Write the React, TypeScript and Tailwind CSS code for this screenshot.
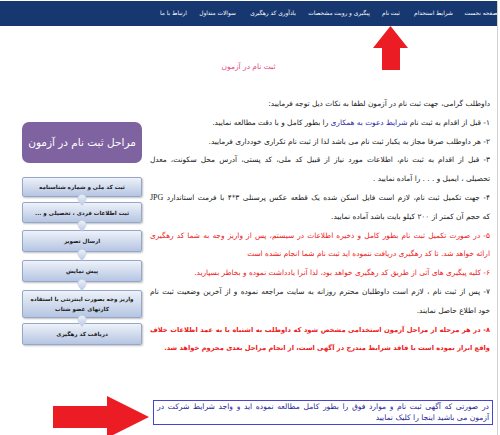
const FA = { fontFamily: '"DejaVu Sans", "Liberation Sans", sans-serif' };

const NAV: { label: string; w: number; gap: number }[] = [
  { label: "صفحه نخست", w: 32, gap: 0 },
  { label: "شرایط استخدام", w: 37, gap: 13 },
  { label: "ثبت نام", w: 18, gap: 15 },
  { label: "پیگیری و رویت مشخصات", w: 58, gap: 14 },
  { label: "یادآوری کد رهگیری", w: 50, gap: 12 },
  { label: "سوالات متداول", w: 35, gap: 13 },
  { label: "ارتباط با ما", w: 27, gap: 13 },
];

type Para = { lines: React.ReactNode[]; tone?: "red" | "redBold" };

const PARAS: Para[] = [
  { lines: ["داوطلب گرامی، جهت ثبت نام در آزمون لطفا به نکات ذیل توجه فرمایید:"] },
  {
    lines: [
      <>
        ۱- قبل از اقدام به ثبت نام <span className="text-[#2a2aa6]">شرایط دعوت به همکاری</span> را بطور
        کامل و با دقت مطالعه نمایید.
      </>,
    ],
  },
  { lines: ["۲- هر داوطلب صرفا مجاز به یکبار ثبت نام می باشد لذا از ثبت نام تکراری خودداری فرمایید."] },
  {
    lines: [
      "۳- قبل از اقدام به ثبت نام، اطلاعات مورد نیاز از قبیل کد ملی، کد پستی، آدرس محل سکونت، معدل",
      "تحصیلی ، ایمیل و . . . را آماده نمایید .",
    ],
  },
  {
    lines: [
      <>
        ۴- جهت تکمیل ثبت نام، لازم است فایل اسکن شده یک قطعه عکس پرسنلی ۳*۴ با فرمت استاندارد{" "}
        <span className="text-[8px]" style={{ fontFamily: '"Liberation Serif", serif' }}>
          JPG
        </span>
      </>,
      "که حجم آن کمتر از ۲۰۰ کیلو بایت باشد آماده نمایید.",
    ],
  },
  {
    tone: "red",
    lines: [
      "۵- در صورت تکمیل ثبت نام بطور کامل و ذخیره اطلاعات در سیستم، پس از واریز وجه به شما کد رهگیری",
      "ارائه خواهد شد. تا کد رهگیری دریافت ننموده اید ثبت نام شما انجام نشده است",
    ],
  },
  {
    tone: "red",
    lines: ["۶- کلیه پیگیری های آتی از طریق کد رهگیری خواهد بود، لذا آنرا یادداشت نموده و بخاطر بسپارید."],
  },
  {
    lines: [
      "۷- پس از ثبت نام ، لازم است داوطلبان محترم روزانه به سایت مراجعه نموده و از آخرین وضعیت ثبت نام",
      "خود اطلاع حاصل نمایند.",
    ],
  },
  {
    tone: "redBold",
    lines: [
      "۸- در هر مرحله از مراحل آزمون استخدامی مشخص شود که داوطلب به اشتباه یا به عمد اطلاعات خلاف",
      "واقع ابراز نموده است یا فاقد شرایط مندرج در آگهی است، از انجام مراحل بعدی محروم خواهد شد.",
    ],
  },
];

// SmartArt-style steps: height and gap below each box, from the screenshot
const STEPS: { text: string[]; h: number; gap: number }[] = [
  { text: ["ثبت کد ملی و شماره شناسنامه"], h: 20, gap: 5 },
  { text: ["ثبت اطلاعات فردی ، تحصیلی و ..."], h: 21, gap: 7 },
  { text: ["ارسال تصویر"], h: 22, gap: 8 },
  { text: ["پیش نمایش"], h: 22, gap: 8 },
  { text: ["واریز وجه بصورت اینترنتی با استفاده", "کارتهای عضو شتاب"], h: 28, gap: 5 },
  { text: ["دریافت کد رهگیری"], h: 22, gap: 0 },
];

function Connector({ h }: { h: number }) {
  return (
    <div className="relative flex justify-center" style={{ height: h }}>
      <svg width="10" height="12" viewBox="0 0 10 12" className="absolute -top-[3px] z-10">
        <defs>
          <linearGradient id="cg" x1="0" y1="0" x2="0" y2="1">
            <stop offset="0" stopColor="#eef2f9" />
            <stop offset="1" stopColor="#b9c8e3" />
          </linearGradient>
        </defs>
        <path d="M5 0.5 A4.2 4.2 0 0 1 9.2 4.7 Q9.2 7 5 11.5 Q0.8 7 0.8 4.7 A4.2 4.2 0 0 1 5 0.5Z" fill="url(#cg)" stroke="#c3cfe4" strokeWidth="0.6" />
      </svg>
    </div>
  );
}

function StepPanel() {
  return (
    <div className="mt-[27px] ml-[22px] w-[120px] shrink-0" dir="rtl" style={FA}>
      <div className="flex h-[41px] items-center justify-center rounded-[7px] bg-[#7f63a1] text-[10.5px] text-white">
        مراحل ثبت نام در آزمون
      </div>
      <div className="h-[14px]" />
      {STEPS.map((s, i) => (
        <div key={i}>
          <div
            className="flex flex-col items-center justify-center rounded-[2px] border border-[#95a8cc] bg-gradient-to-b from-[#eef2f9] to-[#b5c5e2] text-[5.6px] font-bold leading-[10px] text-[#1a1a1a] shadow-[1px_1px_2px_rgba(0,0,0,0.25)]"
            style={{ height: s.h }}
          >
            {s.text.map((t) => (
              <span key={t} className="whitespace-nowrap">
                {t}
              </span>
            ))}
          </div>
          {s.gap > 0 && <Connector h={s.gap} />}
        </div>
      ))}
    </div>
  );
}

function Notes() {
  return (
    <div dir="rtl" className="ml-[8px] w-[340px] text-[7.4px] leading-[18.8px] text-[#222]" style={FA}>
      {PARAS.map((p, i) => (
        <div
          key={i}
          className={
            p.tone === "red"
              ? "text-[#ee2020]"
              : p.tone === "redBold"
                ? "text-[6.7px] font-bold text-[#ee2020]"
                : ""
          }
        >
          {p.lines.map((l, j) => (
            <div
              key={j}
              className={
                j < p.lines.length - 1
                  ? "whitespace-nowrap text-justify [text-align-last:justify]"
                  : "whitespace-nowrap"
              }
            >
              {l}
            </div>
          ))}
        </div>
      ))}
    </div>
  );
}

export default function App() {
  return (
    <div className="relative h-[435px] w-[500px] overflow-hidden bg-white">
      <div className="h-full w-[498px] border-r border-[#cfd2d6]">
        <nav
          dir="rtl"
          className="mt-[1px] flex h-[25px] w-[497px] items-center bg-[#16376f] pb-[1px] text-[5.8px] text-white"
          style={FA}
        >
          {NAV.map((n) => (
            <div
              key={n.label}
              className="flex shrink-0 justify-center whitespace-nowrap"
              style={{ width: n.w, marginRight: n.gap }}
            >
              {n.label}
            </div>
          ))}
        </nav>

        <div className="mt-[35px] text-center text-[7.5px] leading-[12px] text-[#df4a7c]" dir="rtl" style={FA}>
          ثبت نام در آزمون
        </div>

        <div className="mt-[22px] flex">
          <StepPanel />
          <Notes />
        </div>

        <div className="ml-[153px] mt-[42px] w-[340px] border border-[#4545d2] px-[3px] py-[1px]" dir="rtl">
          <p className="text-[7.6px] leading-[10.5px] text-[#1f2596]" style={FA}>
            <span className="block text-justify [text-align-last:justify]">
              در صورتی که آگهی ثبت نام و موارد فوق را بطور کامل مطالعه نموده اید و واجد شرایط شرکت در
            </span>
            <span className="block">آزمون می باشید اینجا را کلیک نمایید</span>
          </p>
        </div>
      </div>

      {/* red callout arrows pasted over the page */}
      <svg className="absolute left-[373px] top-[26px]" width="35" height="44" viewBox="0 0 35 44">
        <polygon points="17.5,0 35,22 27,22 27,44 9,44 9,22 0,22" fill="#ec1c24" />
      </svg>
      <svg className="absolute left-[53px] top-[396px]" width="96" height="42" viewBox="0 0 96 42">
        <polygon points="0,10 54,10 54,0 96,21 54,42 54,32 0,32" fill="#ec1c24" />
      </svg>
    </div>
  );
}
